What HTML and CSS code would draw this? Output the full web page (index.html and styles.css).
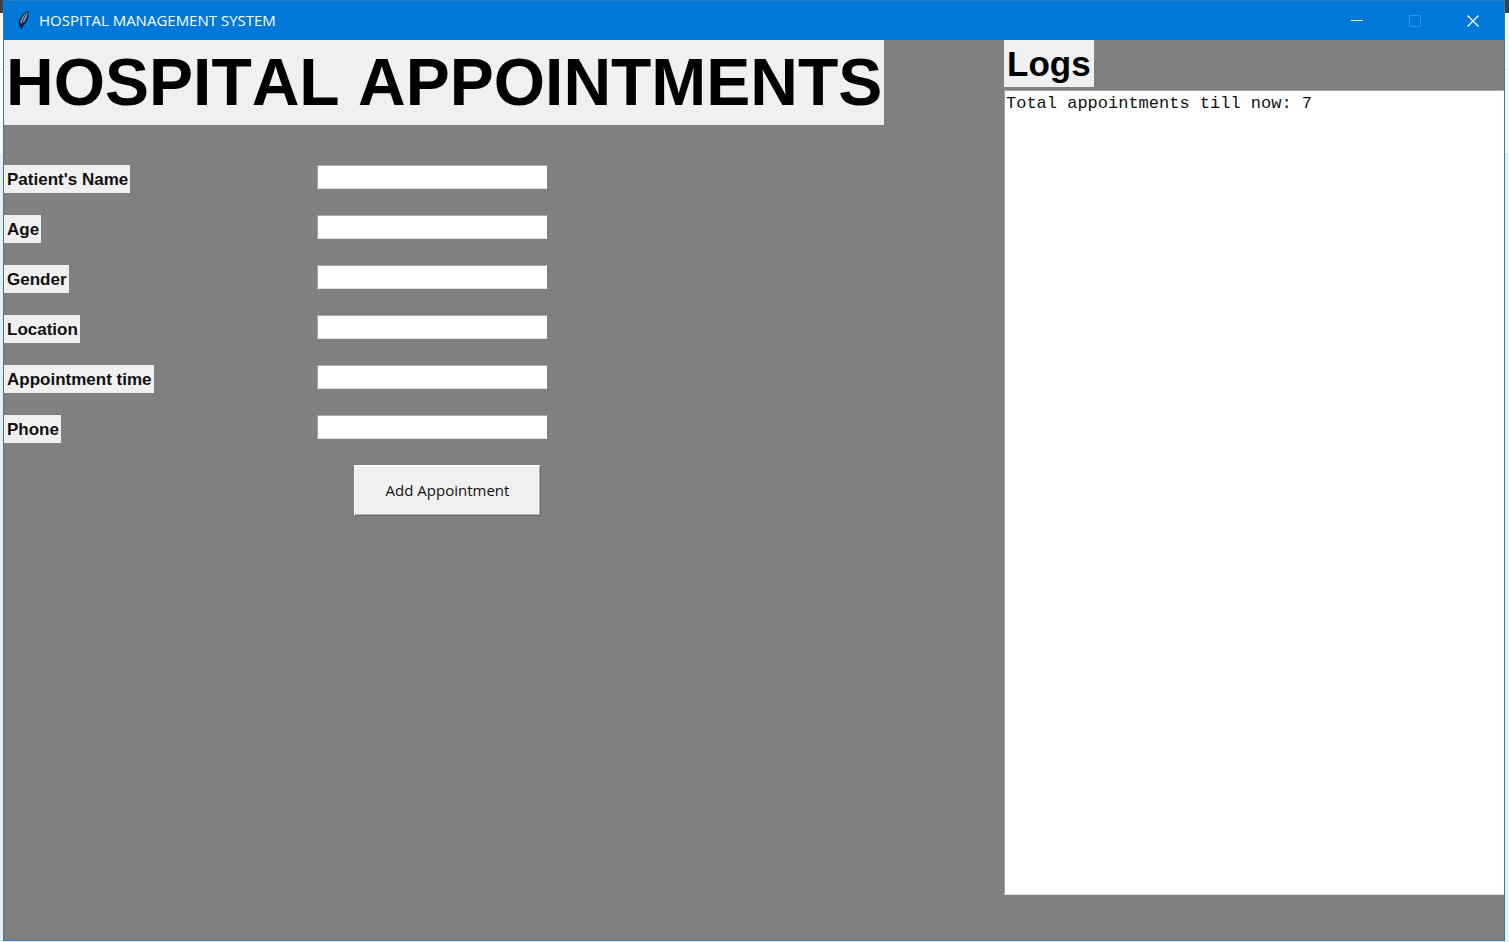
FILE: index.html
```html
<!DOCTYPE html>
<html lang="en">
<head>
<meta charset="utf-8">
<title>HOSPITAL MANAGEMENT SYSTEM</title>
<link rel="stylesheet" href="styles.css">
</head>
<body class="desktop">
<div class="window">
  <header class="titlebar">
    <svg class="feather" viewBox="0 0 20 20" aria-hidden="true">
      <path d="M14.500 0 C10.500 1 5.500 6 4.500 11 L5 14 L7.500 19 L9 15 C13 12 15.500 6 14.500 0Z" fill="#10294a"/>
      <path d="M13.500 1.500 C10 3 7 7 6.500 12 L8 13 C11 10 13.500 6 13.500 1.500Z" fill="#8fa9c6"/>
      <path d="M12.500 3 C10 6 8 10 7.500 18" fill="none" stroke="#0b1727"/>
    </svg>
    <span class="title">HOSPITAL MANAGEMENT SYSTEM</span>
    <div class="controls">
      <button class="control" type="button" aria-label="Minimize"><svg viewBox="0 0 12 12"><path d="M0 5.500H12"/></svg></button>
      <button class="control" type="button" aria-label="Maximize" disabled><svg viewBox="0 0 12 12"><path d="M.5 .5H11.500V11.500H.5Z"/></svg></button>
      <button class="control" type="button" aria-label="Close"><svg viewBox="0 0 12 12"><path d="M.5 .5L11.500 11.500M11.500 .5L.5 11.500" stroke-width="1.300"/></svg></button>
    </div>
  </header>
  <main class="content">
    <section class="entry">
      <h1 class="heading">HOSPITAL APPOINTMENTS</h1>
      <form class="form">
        <div class="row"><div class="cell"><label class="label" for="name">Patient's Name</label></div><input class="field" id="name" type="text"></div>
        <div class="row"><div class="cell"><label class="label" for="age">Age</label></div><input class="field" id="age" type="text"></div>
        <div class="row"><div class="cell"><label class="label" for="gender">Gender</label></div><input class="field" id="gender" type="text"></div>
        <div class="row"><div class="cell"><label class="label" for="location">Location</label></div><input class="field" id="location" type="text"></div>
        <div class="row"><div class="cell"><label class="label" for="time">Appointment time</label></div><input class="field" id="time" type="text"></div>
        <div class="row"><div class="cell"><label class="label" for="phone">Phone</label></div><input class="field" id="phone" type="text"></div>
        <button class="add" type="button">Add Appointment</button>
      </form>
    </section>
    <section class="logs">
      <h2 class="logs-title"><label for="log">Logs</label></h2>
      <textarea class="log" id="log" spellcheck="false">Total appointments till now: 7</textarea>
    </section>
  </main>
</div>
</body>
</html>
```

FILE: styles.css
```css
* { box-sizing: border-box; }

.desktop {
  margin: 0;
  min-height: 100vh;
  display: flex;
  padding: 0 4px 1px 3px;
  background: linear-gradient(#3b4048 0 13px, #ffffff 13px 69px, #e4e8ec 69px 70px, #ffffff 70px 153px, #e9f0f5 153px);
  font-family: "Liberation Sans", Arial, sans-serif;
}

.window {
  flex: 1;
  display: flex;
  flex-direction: column;
  border: 1px solid #2b7cb8;
  background: #808080;
}

.titlebar {
  display: flex;
  align-items: center;
  height: 39px;
  padding-left: 10px;
  background: #0078d9;
  color: #ffffff;
  font: 15px/20px "Open Sans", "Noto Sans", sans-serif;
}

.feather { width: 20px; height: 20px; margin-right: 5px; }

.title { flex: 1; padding-bottom: 2px; }

.controls { display: flex; padding-right: 2px; }

.control {
  display: flex;
  align-items: center;
  justify-content: center;
  width: 58px;
  height: 39px;
  padding: 0;
  border: 0;
  background: none;
}

.control svg { width: 12px; height: 12px; fill: none; stroke: #ffffff; }
.control:disabled svg { stroke: #2a98ee; }

.content {
  flex: 1;
  display: grid;
  grid-template-columns: 2fr 1fr;
}

.entry { min-width: 0; }

.heading {
  width: fit-content;
  margin: 0 0 40px;
  padding: 0 2px;
  background: #f0f0f0;
  color: #000000;
  font-size: 66px;
  line-height: 85px;
  font-kerning: none;
  white-space: nowrap;
}

.form { display: flex; flex-direction: column; align-items: flex-start; }

.row {
  display: grid;
  grid-template-columns: 313px 230px;
  align-items: start;
  height: 50px;
}

.label {
  display: inline-block;
  padding: 1px 2px 0 3px;
  background: #f0f0f0;
  color: #111111;
  font-size: 17px;
  font-weight: bold;
  line-height: 27px;
  font-kerning: none;
}

.field {
  width: 100%;
  height: 24px;
  padding: 0 2px;
  border: 1px solid;
  border-color: #a6a6a6 #ffffff #e3e3e3 #a6a6a6;
  background: #ffffff;
  font-size: 15px;
}

.add {
  width: 187px;
  height: 51px;
  margin-left: 350px;
  padding: 0 0 2px;
  border: 1px solid;
  border-color: #ffffff #696969 #696969 #ffffff;
  box-shadow: inset -1px -1px #b4b4b4;
  background: #f0f0f0;
  color: #111111;
  font: 15px/20px "Open Sans", "Noto Sans", sans-serif;
}

.logs {
  display: flex;
  flex-direction: column;
  align-items: flex-start;
  padding-bottom: 45px;
}

.logs-title {
  margin: 0 0 3px;
  padding: 0 3px;
  background: #f0f0f0;
  color: #000000;
  font-size: 35px;
  line-height: 47px;
  font-kerning: none;
}

.log {
  flex: 1;
  width: 100%;
  padding: 3px 1px;
  border: 1px solid;
  border-color: #a6a6a6 #ffffff #e3e3e3 #a6a6a6;
  resize: none;
  background: #ffffff;
  color: #111111;
  font: 17px/20px "Liberation Mono", "Courier New", monospace;
}
```
